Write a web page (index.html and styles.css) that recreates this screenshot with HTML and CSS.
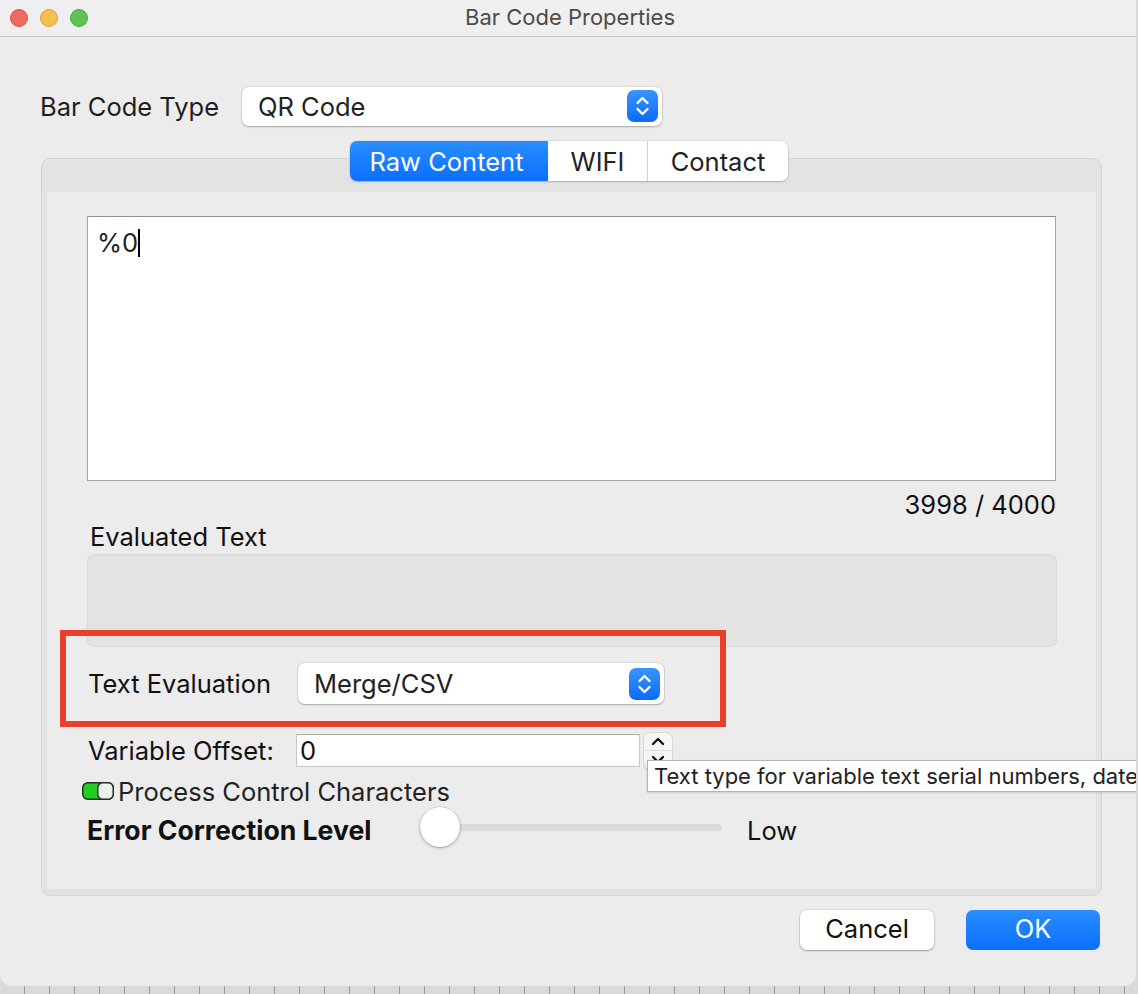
FILE: index.html
```html
<!DOCTYPE html>
<html>
<head>
<meta charset="utf-8">
<title>Bar Code Properties</title>
<link rel="stylesheet" href="styles.css">
</head>
<body>
<div class="window">
  <div class="titlebar">
    <div class="lights">
      <span class="light red"></span>
      <span class="light yellow"></span>
      <span class="light green"></span>
    </div>
    <div class="title">Bar Code Properties</div>
  </div>
  <div class="main">
    <div class="type-row">
      <div class="type-label">Bar Code Type</div>
      <div class="select type-select">
        <span class="select-text">QR Code</span>
        <span class="stepper-btn">
          <svg width="31" height="32" viewBox="0 0 31 32"><path d="M10.5 13 L15.5 8 L20.5 13" fill="none" stroke="#fff" stroke-width="2.4" stroke-linecap="round" stroke-linejoin="round"/><path d="M10.5 19 L15.5 24 L20.5 19" fill="none" stroke="#fff" stroke-width="2.4" stroke-linecap="round" stroke-linejoin="round"/></svg>
        </span>
      </div>
    </div>
    <div class="tabs">
      <div class="segmented">
        <div class="seg seg-active">Raw Content</div>
        <div class="seg seg-mid">WIFI</div>
        <div class="seg">Contact</div>
      </div>
    </div>
    <div class="pane">
      <div class="pane-inner">
        <div class="textarea"><span class="ta-text">%0</span><span class="caret"></span></div>
        <div class="counter">3998 / 4000</div>
        <div class="eval-label">Evaluated Text</div>
        <div class="eval-box"></div>
        <div class="te-row">
          <div class="te-label">Text Evaluation</div>
          <div class="select te-select">
            <span class="select-text">Merge/CSV</span>
            <span class="stepper-btn small">
              <svg width="31" height="32" viewBox="0 0 31 32"><path d="M10.5 13 L15.5 8 L20.5 13" fill="none" stroke="#fff" stroke-width="2.4" stroke-linecap="round" stroke-linejoin="round"/><path d="M10.5 19 L15.5 24 L20.5 19" fill="none" stroke="#fff" stroke-width="2.4" stroke-linecap="round" stroke-linejoin="round"/></svg>
            </span>
          </div>
        </div>
        <div class="vo-row">
          <div class="vo-label">Variable Offset:</div>
          <div class="vo-input">0</div>
          <div class="vo-stepper">
            <div class="vo-up"><svg width="28" height="18" viewBox="0 0 28 18"><path d="M9 11 L14 6 L19 11" fill="none" stroke="#111" stroke-width="2.4" stroke-linecap="round" stroke-linejoin="round"/></svg></div>
            <div class="vo-down"><svg width="28" height="18" viewBox="0 0 28 18"><path d="M9 6 L14 11 L19 6" fill="none" stroke="#111" stroke-width="2.4" stroke-linecap="round" stroke-linejoin="round"/></svg></div>
          </div>
        </div>
        <div class="pc-row">
          <svg class="toggle" width="32" height="18" viewBox="0 0 32 18">
            <rect x="0.75" y="0.75" width="30.5" height="16.5" rx="5" fill="#1fce1f" stroke="#2a2a2a" stroke-width="1.5"/>
            <rect x="15.75" y="0.75" width="15.5" height="16.5" rx="5" fill="#e9f1e9" stroke="#2a2a2a" stroke-width="1.5"/>
          </svg>
          <span class="pc-text">Process Control Characters</span>
        </div>
        <div class="ec-row">
          <div class="ec-label">Error Correction Level</div>
          <div class="slider">
            <div class="track"></div>
            <div class="knob"></div>
          </div>
          <div class="ec-value">Low</div>
        </div>
        <div class="highlight"></div>
      </div>
    </div>
    <div class="buttons">
      <div class="btn btn-cancel">Cancel</div>
      <div class="btn btn-ok">OK</div>
    </div>
  </div>
  <div class="tooltip">Text type for variable text serial numbers, dates and times</div>
</div>
</body>
</html>
```
FILE: styles.css
```css
html, body {
  margin: 0;
  padding: 0;
}
body {
  width: 1138px;
  height: 994px;
  overflow: hidden;
  position: relative;
  background: #d9d9d9 repeating-linear-gradient(90deg, transparent 0, transparent 24px, #9a9a9a 24px, #9a9a9a 25px);
  font-family: Inter, "Noto Sans", sans-serif;
  color: #1e1e1e;
}
.window {
  position: relative;
  width: 1136px;
  height: 986px;
  background: #ececec;
  border-radius: 0 0 12px 12px;
  overflow: hidden;
}
.titlebar {
  height: 36px;
  border-bottom: 1px solid #c6c6c6;
  background: #eeefee;
  display: flex;
  align-items: center;
  position: relative;
}
.lights {
  display: flex;
  gap: 12px;
  padding-left: 10px;
}
.light {
  width: 18px;
  height: 18px;
  border-radius: 50%;
  box-sizing: border-box;
}
.light.red { background: #ee6a5e; border: 1px solid #d9544a; }
.light.yellow { background: #f5bf4f; border: 1px solid #d9a23b; }
.light.green { background: #5fc454; border: 1px solid #4aa83f; }
.title {
  flex: 1;
  text-align: center;
  font-size: 22px;
  line-height: 26px;
  padding-bottom: 2px;
  color: #4b4b4b;
  margin-right: 84px;
}
.main {
  padding: 49px 0 0 0;
}
.type-row {
  display: flex;
  align-items: center;
  height: 40px;
  padding-left: 40px;
}
.type-label {
  width: 202px;
  font-size: 25.5px;
}
.select {
  display: flex;
  align-items: center;
  background: #fff;
  border-radius: 7px;
  box-shadow: 0 0 0 1px rgba(0,0,0,0.06), 0 1px 2px rgba(0,0,0,0.25);
  box-sizing: border-box;
}
.type-select {
  width: 420px;
  height: 39px;
  padding-left: 16px;
  padding-right: 4px;
}
.select-text {
  flex: 1;
  font-size: 25.5px;
  color: #222;
}
.stepper-btn {
  width: 31px;
  height: 32px;
  border-radius: 7px;
  background: linear-gradient(#3a94ff, #0a6cf7);
  display: flex;
}
.tabs {
  display: flex;
  justify-content: center;
  margin-top: 15px;
  height: 40px;
  position: relative;
  z-index: 2;
  padding-left: 2px;
}
.segmented {
  display: flex;
  background: #fff;
  border-radius: 7px;
  box-shadow: 0 0 0 1px rgba(0,0,0,0.05), 0 1px 2px rgba(0,0,0,0.2);
  overflow: hidden;
}
.seg {
  font-size: 25.5px;
  color: #222;
  display: flex;
  align-items: center;
  justify-content: center;
  height: 40px;
}
.seg-active {
  width: 198px;
  padding-right: 5px;
  box-sizing: border-box;
  background: linear-gradient(#2a8dff, #0a6ffc);
  color: #fff;
}
.seg-mid {
  width: 99px;
  border-right: 1px solid #d3d3d3;
}
.seg:last-child {
  width: 140px;
}
.pane {
  margin: -23px 0 0 41px;
  width: 1061px;
  height: 738px;
  box-sizing: border-box;
  border: 1px solid #d4d4d4;
  border-radius: 9px;
  background: #e3e3e3;
  padding: 33px 5px 6px 5px;
}
.pane-inner {
  position: relative;
  height: 100%;
  background: #ececec;
  padding: 24px 40px 0 40px;
  box-sizing: border-box;
}
.textarea {
  height: 265px;
  background: #fff;
  border: 1px solid #a4a4a4;
  border-top-color: #8e8e8e;
  box-sizing: border-box;
  padding: 11px 9px;
  font-size: 25.5px;
  display: flex;
  align-items: flex-start;
  color: #222;
}
.ta-text {
  line-height: 30px;
}
.caret {
  width: 2px;
  height: 28px;
  background: #000;
  margin-top: 1px;
}
.counter {
  margin-top: 11px;
  height: 26px;
  line-height: 26px;
  text-align: right;
  font-size: 25.5px;
  color: #111;
}
.eval-label {
  margin-top: 6px;
  height: 26px;
  line-height: 26px;
  padding-left: 3px;
  font-size: 25.5px;
  color: #111;
}
.eval-box {
  margin-top: 4px;
  height: 93px;
  background: #e3e3e3;
  border: 1px solid #d9d9d9;
  border-radius: 7px;
  box-sizing: border-box;
  margin-right: -1px;
}
.te-row {
  display: flex;
  align-items: center;
  margin-top: 16px;
  height: 41px;
}
.te-label {
  width: 210px;
  padding-left: 1px;
  font-size: 25.5px;
  color: #111;
}
.te-select {
  width: 366px;
  height: 41px;
  padding-left: 16px;
  padding-right: 4px;
}
.vo-row {
  display: flex;
  align-items: center;
  margin-top: 30px;
  height: 33px;
}
.vo-label {
  width: 208px;
  padding-left: 1px;
  font-size: 25.5px;
  color: #111;
}
.vo-input {
  width: 344px;
  height: 33px;
  background: #fff;
  border: 1px solid #c8c8c8;
  border-top-color: #b0b0b0;
  box-sizing: border-box;
  font-size: 25.5px;
  line-height: 31px;
  padding-left: 3px;
  color: #111;
}
.vo-stepper {
  margin-left: 4px;
  width: 28px;
  height: 36px;
  display: flex;
  flex-direction: column;
  border-radius: 6px;
  background: #f6f6f6;
  box-shadow: 0 0 0 1px rgba(0,0,0,0.08), 0 1px 1px rgba(0,0,0,0.15);
  overflow: hidden;
}
.vo-up, .vo-down {
  height: 18px;
}
.vo-up {
  border-bottom: 1px solid #dedede;
  height: 17px;
}
.pc-row {
  display: flex;
  align-items: center;
  margin-top: 13px;
  height: 22px;
  margin-left: -5px;
}
.toggle {
  display: block;
}
.pc-text {
  margin-left: 4px;
  font-size: 25.5px;
  color: #222;
}
.ec-row {
  display: flex;
  align-items: center;
  margin-top: 5px;
  height: 40px;
}
.ec-label {
  width: 333px;
  font-size: 26.6px;
  font-weight: 700;
  color: #111;
  padding-top: 5px;
}
.slider {
  position: relative;
  width: 302px;
  height: 40px;
  display: flex;
  align-items: center;
}
.track {
  margin-left: 20px;
  flex: 1;
  height: 7px;
  border-radius: 4px;
  background: #dcdcdc;
}
.knob {
  position: absolute;
  left: 0;
  top: 0;
  width: 40px;
  height: 40px;
  border-radius: 50%;
  background: #fff;
  box-shadow: 0 0 0 0.5px rgba(0,0,0,0.15), 0 1px 3px rgba(0,0,0,0.3);
}
.ec-value {
  margin-left: 25px;
  font-size: 25.5px;
  color: #111;
  padding-top: 7px;
}
.highlight {
  position: absolute;
  left: 13px;
  top: 438px;
  width: 666px;
  height: 97px;
  border: 6px solid #e8402a;
  box-sizing: border-box;
}
.buttons {
  display: flex;
  justify-content: flex-end;
  gap: 32px;
  margin-top: 14px;
  padding-right: 36px;
}
.btn {
  width: 134px;
  height: 40px;
  box-sizing: border-box;
  padding-bottom: 3px;
  border-radius: 7px;
  display: flex;
  align-items: center;
  justify-content: center;
  font-size: 25.5px;
}
.btn-cancel {
  background: #fff;
  color: #111;
  box-shadow: 0 0 0 1px rgba(0,0,0,0.05), 0 1px 2px rgba(0,0,0,0.3);
}
.btn-ok {
  background: linear-gradient(#2a8dff, #0a6ffc);
  color: #fff;
}
.tooltip {
  position: absolute;
  left: 647px;
  top: 760px;
  height: 32px;
  box-sizing: border-box;
  background: #fff;
  border: 1px solid #b4b4b4;
  box-shadow: 0 1px 2px rgba(0,0,0,0.15);
  font-size: 22px;
  line-height: 30px;
  padding-left: 6px;
  white-space: nowrap;
  color: #222;
  z-index: 5;
}
```
